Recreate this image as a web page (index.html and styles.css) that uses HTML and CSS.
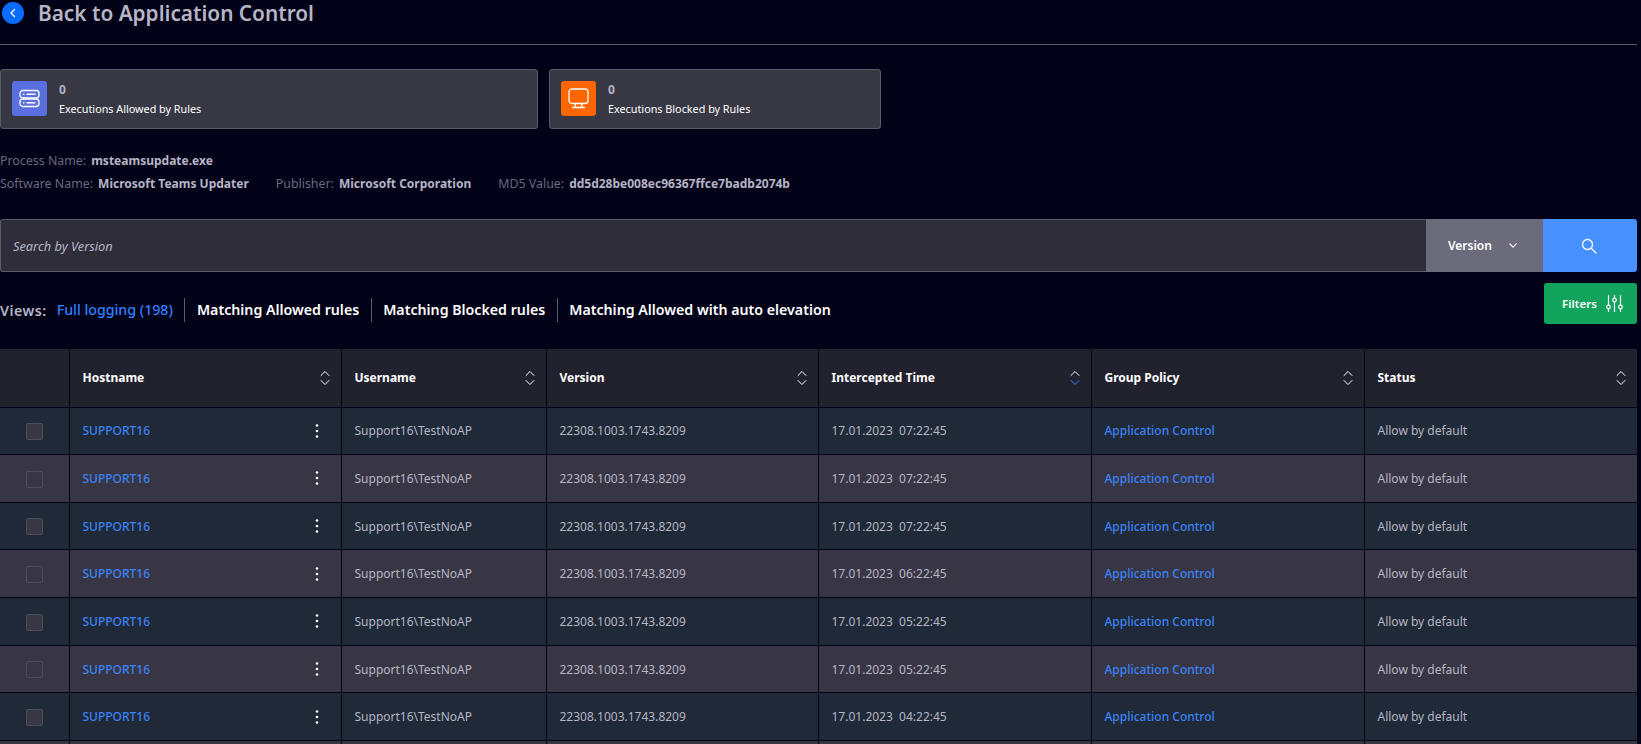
FILE: index.html
```html
<!DOCTYPE html>
<html lang="en">
<head>
    <meta charset="UTF-8">
    <title>Back to Application Control</title>
    <link rel="stylesheet" href="styles.css">
</head>
<body>
    <svg class="defs" width="0" height="0">
        <symbol id="sort" viewBox="0 0 12 16"><path d="M2 5.500 6 1.500l4 4" /><path d="M2 10.500l4 4 4-4" /></symbol>
        <symbol id="kebab" viewBox="0 0 4 16"><circle cx="2" cy="2.500" r="1.300" /><circle cx="2" cy="8" r="1.300" /><circle cx="2" cy="13.500" r="1.300" /></symbol>
    </svg>

    <div class="page-head">
        <a class="back-btn"><svg width="8" height="10" viewBox="0 0 8 10"><path d="M5.500 1.500 2 5l3.500 3.500" /></svg></a>
        <h1>Back to Application Control</h1>
    </div>

    <div class="stats">
        <div class="stat-card stat-wide">
            <div class="stat-icon icon-blue">
                <svg width="21" height="21" viewBox="0 0 21 21"><rect x="1" y="2.500" width="19" height="7.500" rx="3" /><rect x="1" y="11" width="19" height="7.500" rx="3" /><path d="M8 6.250h8M8 14.750h8M4.500 6.250h.5M4.500 14.750h.5" /></svg>
            </div>
            <div>
                <div class="stat-num">0</div>
                <div class="stat-label">Executions Allowed by Rules</div>
            </div>
        </div>
        <div class="stat-card stat-narrow">
            <div class="stat-icon icon-orange">
                <svg width="21" height="21" viewBox="0 0 21 21"><rect x="1" y="1" width="19" height="14.500" rx="3" /><path d="M7.500 15.500 7 19.500M13.500 15.500l.5 4M4.500 19.500h12" /></svg>
            </div>
            <div>
                <div class="stat-num">0</div>
                <div class="stat-label">Executions Blocked by Rules</div>
            </div>
        </div>
    </div>

    <div class="meta">
        <div class="meta-row">
            <span class="meta-item"><span class="meta-key">Process Name:</span><b>msteamsupdate.exe</b></span>
        </div>
        <div class="meta-row">
            <span class="meta-item"><span class="meta-key">Software Name:</span><b>Microsoft Teams Updater</b></span>
            <span class="meta-item"><span class="meta-key">Publisher:</span><b>Microsoft Corporation</b></span>
            <span class="meta-item"><span class="meta-key">MD5 Value:</span><b>dd5d28be008ec96367ffce7badb2074b</b></span>
        </div>
    </div>

    <div class="search-bar">
        <div class="search-input">Search by Version</div>
        <div class="search-select">
            <span>Version</span>
            <svg width="8" height="5" viewBox="0 0 10 6"><path d="M1 1l4 4 4-4" /></svg>
        </div>
        <div class="search-btn">
            <svg width="16" height="16" viewBox="0 0 16 16"><circle cx="6.500" cy="6.500" r="5" /><path d="M10.200 10.200 15 15" /></svg>
        </div>
    </div>

    <div class="views-row">
        <div class="views">
            <span class="views-title">Views:</span>
            <a class="view active">Full logging (198)</a>
            <a class="view">Matching Allowed rules</a>
            <a class="view">Matching Blocked rules</a>
            <a class="view">Matching Allowed with auto elevation</a>
        </div>
        <div class="filters-btn">
            <span>Filters</span>
            <svg width="17" height="17" viewBox="0 0 17 17"><path d="M2.500 0v10M2.500 14v3M8.500 0v3M8.500 7v10M14.500 0v10M14.500 14v3" /><circle cx="2.500" cy="12" r="1.800" /><circle cx="8.500" cy="5" r="1.800" /><circle cx="14.500" cy="12" r="1.800" /></svg>
        </div>
    </div>

    <table class="grid">
        <thead>
            <tr>
                <th class="col-check"></th>
                <th class="col-host"><div class="th-in">Hostname<svg class="sort"><use href="#sort" /></svg></div></th>
                <th class="col-user"><div class="th-in">Username<svg class="sort"><use href="#sort" /></svg></div></th>
                <th class="col-ver"><div class="th-in">Version<svg class="sort"><use href="#sort" /></svg></div></th>
                <th class="col-time"><div class="th-in">Intercepted Time<svg class="sort sorted" viewBox="0 0 12 16"><path d="M2 5.500 6 1.500l4 4" /><path class="down" d="M2 10.500l4 4 4-4" /></svg></div></th>
                <th class="col-group"><div class="th-in">Group Policy<svg class="sort"><use href="#sort" /></svg></div></th>
                <th><div class="th-in">Status<svg class="sort"><use href="#sort" /></svg></div></th>
            </tr>
        </thead>
        <tbody>
            <tr>
                <td><span class="check"></span></td>
                <td><div class="host"><a>SUPPORT16</a><svg class="kebab"><use href="#kebab" /></svg></div></td>
                <td>Support16\TestNoAP</td>
                <td>22308.1003.1743.8209</td>
                <td>17.01.2023&nbsp; 07:22:45</td>
                <td><a>Application Control</a></td>
                <td>Allow by default</td>
            </tr>
            <tr>
                <td><span class="check"></span></td>
                <td><div class="host"><a>SUPPORT16</a><svg class="kebab"><use href="#kebab" /></svg></div></td>
                <td>Support16\TestNoAP</td>
                <td>22308.1003.1743.8209</td>
                <td>17.01.2023&nbsp; 07:22:45</td>
                <td><a>Application Control</a></td>
                <td>Allow by default</td>
            </tr>
            <tr>
                <td><span class="check"></span></td>
                <td><div class="host"><a>SUPPORT16</a><svg class="kebab"><use href="#kebab" /></svg></div></td>
                <td>Support16\TestNoAP</td>
                <td>22308.1003.1743.8209</td>
                <td>17.01.2023&nbsp; 07:22:45</td>
                <td><a>Application Control</a></td>
                <td>Allow by default</td>
            </tr>
            <tr>
                <td><span class="check"></span></td>
                <td><div class="host"><a>SUPPORT16</a><svg class="kebab"><use href="#kebab" /></svg></div></td>
                <td>Support16\TestNoAP</td>
                <td>22308.1003.1743.8209</td>
                <td>17.01.2023&nbsp; 06:22:45</td>
                <td><a>Application Control</a></td>
                <td>Allow by default</td>
            </tr>
            <tr>
                <td><span class="check"></span></td>
                <td><div class="host"><a>SUPPORT16</a><svg class="kebab"><use href="#kebab" /></svg></div></td>
                <td>Support16\TestNoAP</td>
                <td>22308.1003.1743.8209</td>
                <td>17.01.2023&nbsp; 05:22:45</td>
                <td><a>Application Control</a></td>
                <td>Allow by default</td>
            </tr>
            <tr>
                <td><span class="check"></span></td>
                <td><div class="host"><a>SUPPORT16</a><svg class="kebab"><use href="#kebab" /></svg></div></td>
                <td>Support16\TestNoAP</td>
                <td>22308.1003.1743.8209</td>
                <td>17.01.2023&nbsp; 05:22:45</td>
                <td><a>Application Control</a></td>
                <td>Allow by default</td>
            </tr>
            <tr>
                <td><span class="check"></span></td>
                <td><div class="host"><a>SUPPORT16</a><svg class="kebab"><use href="#kebab" /></svg></div></td>
                <td>Support16\TestNoAP</td>
                <td>22308.1003.1743.8209</td>
                <td>17.01.2023&nbsp; 04:22:45</td>
                <td><a>Application Control</a></td>
                <td>Allow by default</td>
            </tr>
            <tr>
                <td></td>
                <td></td>
                <td></td>
                <td></td>
                <td></td>
                <td></td>
                <td></td>
            </tr>
        </tbody>
    </table>
</body>
</html>
```

FILE: styles.css
```css
html, body {
    height: 100%;
    overflow: hidden;
}

body {
    margin: 0;
    padding: 0 4px 0 0;
    background: #010118;
    color: #fff;
    font-family: "Noto Sans", sans-serif;
    font-size: 12px;
}

svg {
    fill: none;
    stroke: #fff;
    stroke-linecap: round;
    stroke-linejoin: round;
}

.defs {
    position: absolute;
}

/* Page head */
.page-head {
    display: flex;
    align-items: flex-start;
    gap: 14px;
    height: 45px;
    padding: 0 0 0 2px;
    box-sizing: border-box;
    border-bottom: 1px solid #5b5a69;
}

.back-btn {
    display: flex;
    align-items: center;
    justify-content: center;
    width: 22px;
    height: 22px;
    margin-top: 2px;
    border-radius: 50%;
    background: #0a6cff;
}

.back-btn svg {
    stroke-width: 1.300;
}

.page-head h1 {
    margin: 0;
    font-size: 20.800px;
    line-height: 26px;
    font-weight: 600;
    color: #b6b5c4;
}

/* Stat cards */
.stats {
    display: flex;
    gap: 11px;
    margin-top: 24px;
}

.stat-card {
    display: flex;
    align-items: center;
    gap: 12px;
    height: 60px;
    padding: 0 11px;
    box-sizing: border-box;
    background: #383744;
    border: 1px solid #5b5a69;
    border-radius: 3px;
}

.stat-wide {
    width: 538px;
}

.stat-narrow {
    width: 332px;
}

.stat-icon {
    display: flex;
    align-items: center;
    justify-content: center;
    width: 35px;
    height: 35px;
    margin-bottom: 1px;
    border-radius: 3px;
}

.stat-icon svg {
    stroke-width: 1.300;
}

.icon-blue {
    background: #5a6fe0;
}

.icon-orange {
    background: #ff6600;
}

.stat-num {
    font-size: 12px;
    line-height: 18px;
    font-weight: 700;
    color: #b6b5c4;
}

.stat-label {
    margin-top: 1px;
    font-size: 10.800px;
    line-height: 18px;
    color: #fff;
}

/* Process meta */
.meta {
    margin-top: 20px;
}

.meta-row {
    display: flex;
    gap: 27px;
    height: 23px;
    align-items: center;
}

.meta-item {
    display: flex;
    gap: 5px;
    white-space: nowrap;
}

.meta-key {
    color: #696880;
    font-size: 12.400px;
}

.meta-item b {
    color: #b6b5c4;
    font-size: 12px;
    line-height: 17px;
    font-weight: 700;
}

/* Search */
.search-bar {
    display: flex;
    height: 53px;
    margin-top: 24px;
}

.search-input {
    flex: 1;
    display: flex;
    align-items: center;
    padding-left: 12px;
    background: #2e2d39;
    border: 1px solid #5b5a69;
    border-right: 0;
    border-radius: 3px 0 0 3px;
    color: #b6b5c4;
    font-size: 12.800px;
    font-style: italic;
}

.search-select {
    display: flex;
    align-items: center;
    gap: 17px;
    width: 117px;
    padding-left: 22px;
    box-sizing: border-box;
    background: #6c6b7b;
    font-weight: 600;
}

.search-select svg {
    stroke-width: 1.500;
}

.search-btn {
    display: flex;
    align-items: center;
    justify-content: center;
    width: 94px;
    padding-right: 2px;
    box-sizing: border-box;
    background: #4790ff;
    border-radius: 0 3px 3px 0;
}

.search-btn svg {
    stroke-width: 1.300;
}

/* Views */
.views-row {
    display: flex;
    justify-content: space-between;
    align-items: flex-start;
    margin-top: 11px;
}

.views {
    display: flex;
    align-items: center;
    margin-top: 15px;
    font-size: 14.200px;
    font-weight: 600;
}

.views-title {
    margin-right: 10px;
    letter-spacing: .5px;
    color: #b6b5c4;
}

.view {
    height: 24px;
    line-height: 24px;
    padding: 0 11.500px;
    border-right: 1px solid #5b5a69;
}

.view:last-child {
    border-right: 0;
}

.view.active {
    padding-left: 0;
    color: #2f80ff;
    font-weight: 500;
}

.filters-btn {
    display: flex;
    align-items: center;
    justify-content: center;
    gap: 9px;
    width: 93px;
    height: 41px;
    padding-left: 4px;
    box-sizing: border-box;
    background: #12a45c;
    border-radius: 3px;
    font-size: 11.500px;
    font-weight: 600;
}

.filters-btn svg {
    stroke-width: 1.200;
}

/* Table */
.grid {
    width: 100%;
    margin-top: 25px;
    table-layout: fixed;
    border-collapse: collapse;
}

.grid th {
    height: 58px;
    padding: 0 10px 0 13px;
    box-sizing: border-box;
    background: #22212e;
    border-right: 1px solid #010118;
    text-align: left;
    font-weight: 700;
}

.grid th:last-child,
.grid td:last-child {
    border-right: 0;
}

.th-in {
    display: flex;
    align-items: center;
    justify-content: space-between;
}

.col-check {
    width: 69px;
}

.col-host {
    width: 272px;
}

.col-user {
    width: 205px;
}

.col-ver {
    width: 272px;
}

.col-time,
.col-group {
    width: 273px;
}

.sort {
    width: 12px;
    height: 16px;
    stroke-width: 1;
}

.sorted .down {
    stroke: #2f80ff;
}

.grid td {
    height: 47.670px;
    padding: 0 13px;
    box-sizing: border-box;
    border-top: 1px solid #010118;
    border-right: 1px solid #010118;
    color: #b6b5c4;
    font-size: 12px;
}

.grid tbody tr:nth-child(odd) td {
    background: #1f2937;
}

.grid tbody tr:nth-child(even) td {
    background: #383644;
}

.grid td a {
    color: #3b82f6;
    font-weight: 500;
}

.grid td:first-child {
    text-align: center;
}

.check {
    display: inline-block;
    vertical-align: middle;
    width: 15px;
    height: 15px;
    background: #383744;
    border: 1px solid #4d4c5b;
    border-radius: 2px;
}

.grid tbody tr:nth-child(even) .check {
    background: #383644;
}

.host {
    display: flex;
    align-items: center;
    justify-content: space-between;
    padding-right: 9px;
}

.kebab {
    width: 4px;
    height: 16px;
    fill: #fff;
    stroke: none;
}
```
